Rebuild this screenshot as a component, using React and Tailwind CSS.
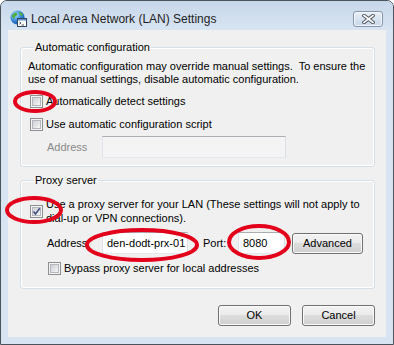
import React from "react";

function CheckBox({ checked }) {
  return (
    <div className="w-[13px] h-[13px] shrink-0 border border-[#8e8f8f] bg-[#f4f4f4] p-[1px]">
      <div className="relative w-full h-full border border-[#b3b7bd] bg-gradient-to-br from-[#cdd0d5] to-[#f5f5f5]">
        {checked && (
          <svg className="absolute -left-[1px] -top-[1px]" width="9" height="9" viewBox="0 0 9 9">
            <path d="M1.5 4.5 L3.5 7 L7.8 1.2" fill="none" stroke="#3d4f86" strokeWidth="1.6" />
          </svg>
        )}
      </div>
    </div>
  );
}

function WinButton({ children, className }) {
  return (
    <button
      className={
        "h-[21px] rounded-[3px] border border-[#707070] text-[11px] leading-[19px] text-black shadow-[inset_0_0_0_1px_#fbfbfb] bg-[linear-gradient(to_bottom,#f2f2f2_0%,#ebebeb_50%,#dddddd_50%,#cfcfcf_100%)] " +
        className
      }
    >
      {children}
    </button>
  );
}

function TextBox({ value, disabled, className }) {
  return (
    <div
      className={
        "h-[22px] border border-t-[#abadb3] border-l-[#e2e3ea] border-r-[#dbdfe6] border-b-[#e3e9ef] pl-[4px] text-[11px] leading-[20px] whitespace-nowrap overflow-hidden " +
        (disabled ? "bg-[#f4f4f4] border-[#c6c6c6] " : "bg-white ") +
        className
      }
    >
      {value}
    </div>
  );
}

function GlobeIcon() {
  return (
    <svg width="17" height="17" viewBox="0 0 17 17">
      <defs>
        <radialGradient id="gl" cx="0.35" cy="0.3" r="0.8">
          <stop offset="0" stopColor="#a9dcff" />
          <stop offset="0.6" stopColor="#2b7fd4" />
          <stop offset="1" stopColor="#174f9a" />
        </radialGradient>
      </defs>
      <circle cx="7.5" cy="7.5" r="7" fill="url(#gl)" />
      <path d="M3 4 Q5 2 7 3 Q8 5 6 6 Q4 7 4 9 Q2 8 2 6 Z" fill="#4fae3c" />
      <path d="M9 2 Q12 2 13 5 Q11 6 10 5 Z" fill="#4fae3c" />
      <path d="M8 9 Q10 8 11 10 Q9 13 8 12 Z" fill="#4fae3c" />
      <rect x="7.5" y="8.5" width="9" height="8" fill="#ffffff" stroke="#33475f" />
      <rect x="8" y="9" width="8" height="1.5" fill="#5b8cc8" />
      <path d="M9.5 12 L11 13 L9.5 14" fill="none" stroke="#222" strokeWidth="0.8" />
      <path d="M11.5 15 H14" stroke="#222" strokeWidth="0.8" />
    </svg>
  );
}

export default function App() {
  return (
    <div
      className="relative w-[394px] h-[345px] overflow-hidden rounded-t-[7px] border border-[#4a525c] bg-[#d8e4f2]"
      style={{ fontFamily: '"Liberation Sans", Arial, sans-serif' }}
    >
      {/* title bar */}
      <div className="h-[29px] pt-[6px] pl-[9px] pr-[10px] flex items-center bg-gradient-to-b from-[#c7d7ea] to-[#d8e4f2]">
        <GlobeIcon />
        <div className="ml-[4px] text-[12px] text-[#1e1e1e] flex-1 whitespace-nowrap">Local Area Network (LAN) Settings</div>
        <div className="w-[30px] h-[16px] rounded-[3px] border border-[#8797ab] bg-gradient-to-b from-[#e9f0f8] to-[#c9d7e8] flex items-center justify-center shadow-[inset_0_0_0_1px_#f2f6fb]">
          <svg width="13" height="10" viewBox="0 0 13 10">
            <path d="M2 1.5 L11 8.5 M11 1.5 L2 8.5" stroke="#555c66" strokeWidth="3.6" strokeLinecap="square" />
            <path d="M2 1.5 L11 8.5 M11 1.5 L2 8.5" stroke="#ffffff" strokeWidth="1.6" strokeLinecap="square" />
          </svg>
        </div>
      </div>

      {/* client area */}
      <div className="mx-[7px] h-[307px] bg-[#f0f0f0] flex flex-col text-[11px] text-black whitespace-nowrap">
        <fieldset className="mt-[10px] ml-[12px] w-[355px] border border-[#d5dfe5] rounded-[3px] shadow-[inset_0_0_0_1px_#ffffff] pl-[7px] pt-[5px] pb-[8px]">
          <legend className="ml-[6px] px-[1px] leading-[15px]">Automatic configuration</legend>
          <div className="leading-[13px]">
            Automatic configuration may override manual settings.&nbsp; To ensure the
            <br />
            use of manual settings, disable automatic configuration.
          </div>
          <div className="mt-[9px] ml-[2px] flex items-center gap-[3px] leading-[13px]">
            <CheckBox />
            <span>Automatically detect settings</span>
          </div>
          <div className="mt-[10px] ml-[2px] flex items-center gap-[3px] leading-[13px]">
            <CheckBox />
            <span>Use automatic configuration script</span>
          </div>
          <div className="mt-[5px] flex items-center">
            <span className="ml-[19px] w-[55px] text-[#8a8a8a]">Address</span>
            <TextBox disabled className="w-[184px]" />
          </div>
        </fieldset>

        <fieldset className="mt-[6px] ml-[12px] w-[355px] border border-[#d5dfe5] rounded-[3px] shadow-[inset_0_0_0_1px_#ffffff] pl-[7px] pt-[9px] pb-[13px]">
          <legend className="ml-[6px] px-[1px] leading-[15px]">Proxy server</legend>
          <div className="ml-[2px] flex items-center gap-[3px]">
            <CheckBox checked />
            <div className="leading-[14px]">
              Use a proxy server for your LAN (These settings will not apply to
              <br />
              dial-up or VPN connections).
            </div>
          </div>
          <div className="mt-[7px] flex items-center">
            <span className="ml-[19px] w-[55px]">Address:</span>
            <TextBox value="den-dodt-prx-01" className="w-[86px]" />
            <span className="ml-[15px] w-[35px]">Port:</span>
            <TextBox value="8080" className="w-[47px]" />
            <WinButton className="ml-[7px] w-[71px]">Advanced</WinButton>
          </div>
          <div className="mt-[8px] ml-[20px] flex items-center gap-[3px] leading-[13px]">
            <CheckBox />
            <span>Bypass proxy server for local addresses</span>
          </div>
        </fieldset>

        <div className="mt-[16px] pr-[11px] flex justify-end gap-[11px]">
          <WinButton className="w-[73px]">OK</WinButton>
          <WinButton className="w-[73px]">Cancel</WinButton>
        </div>
      </div>

      {/* red annotation marks */}
      <svg className="absolute left-0 top-0 pointer-events-none" width="394" height="345" viewBox="0 0 394 345">
        <g fill="none" stroke="#e3001b" strokeWidth="4">
          <ellipse cx="34" cy="100.5" rx="20" ry="9.5" />
          <ellipse cx="33" cy="209" rx="27" ry="12" />
          <ellipse cx="141" cy="244" rx="55" ry="15" />
          <ellipse cx="258" cy="241" rx="30" ry="16" />
        </g>
      </svg>
    </div>
  );
}
